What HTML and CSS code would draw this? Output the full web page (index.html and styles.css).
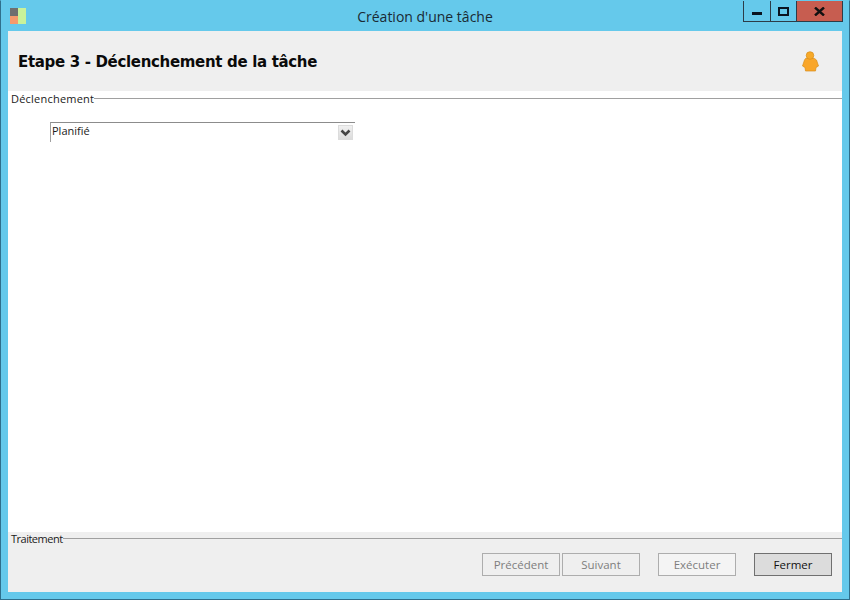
FILE: index.html
```html
<!DOCTYPE html>
<html lang="fr">
<head>
<meta charset="utf-8">
<title>Création d'une tâche</title>
<link rel="stylesheet" href="styles.css">
</head>
<body>
<div class="window">
  <div class="titlebar">
    <svg class="app-icon" width="17" height="16" viewBox="0 0 17 16">
      <rect x="0" y="0" width="8" height="8" fill="#6f6f6f"/>
      <rect x="0" y="8" width="8" height="8" fill="#f59a6c"/>
      <rect x="8" y="0" width="8" height="16" fill="#c9f29a"/>
    </svg>
    <div class="title">Création d'une tâche</div>
    <div class="controls">
      <div class="ctl ctl-min"><svg width="14" height="6" viewBox="0 0 14 6" class="min-glyph"><rect x="2" y="1" width="10" height="3" fill="#0a1420"/></svg></div>
      <div class="ctl ctl-max"><svg width="11" height="9" viewBox="0 0 11 9"><rect x="1" y="1" width="9" height="7" fill="none" stroke="#0a1420" stroke-width="2"/></svg></div>
      <div class="ctl ctl-close"><svg width="11" height="9" viewBox="0 0 11 9"><path d="M1 .5L10 8.500M10 .5L1 8.500" stroke="#111" stroke-width="2.400" fill="none"/></svg></div>
    </div>
  </div>
  <div class="client">
    <header class="head">
      <h1 class="head-title">Etape 3 - Déclenchement de la tâche</h1>
      <svg class="person" width="18" height="21" viewBox="0 0 18 21">
        <path d="M4.500 7.500h9l2 1.500 2 6-2.500 1.500-.5 3.500H4.500L4 16.500 1.500 15l2-6z" fill="#f9a62a" stroke="#d98e1a" stroke-width=".7"/>
        <circle cx="9" cy="4.500" r="3.800" fill="#f7a928" stroke="#d98e1a" stroke-width=".7"/>
      </svg>
    </header>
    <section class="main">
      <div class="group"><span class="group-label label-trigger">Déclenchement</span><span class="group-line"></span></div>
      <div class="combo">
        <span class="combo-text">Planifié</span>
        <span class="combo-btn"><svg width="11" height="8" viewBox="0 0 11 8"><path d="M1.500 1.500L5.500 5.500L9.500 1.500" fill="none" stroke="#444" stroke-width="2.600"/></svg></span>
      </div>
    </section>
    <footer class="foot">
      <div class="group"><span class="group-label label-process">Traitement</span><span class="group-line"></span></div>
      <div class="actions">
        <button class="btn" disabled>Précédent</button>
        <button class="btn btn-next" disabled>Suivant</button>
        <button class="btn btn-run" disabled>Exécuter</button>
        <button class="btn btn-close">Fermer</button>
      </div>
    </footer>
  </div>
</div>
</body>
</html>
```
FILE: styles.css
```css
* { box-sizing: border-box; }
html, body { margin: 0; padding: 0; }
body { width: 850px; height: 600px; overflow: hidden; font-family: "Open Sans", "Noto Sans", sans-serif; }
.window {
  width: 850px; height: 600px;
  background: #65c9eb;
  border: 1px solid #2f6f8c;
  border-top-color: #65c9eb;
  display: flex; flex-direction: column;
  padding: 0 7px 7px;
}
.titlebar { height: 30px; flex: none; display: flex; align-items: flex-start; position: relative; }
.app-icon { margin: 7px 0 0 2px; flex: none; }
.title {
  position: absolute; left: 0; right: 0; top: 6px;
  text-align: center; font-size: 14px; line-height: 19px; color: #1a2a33;
}
.controls { margin-left: auto; margin-right: -1px; display: flex; height: 21px; position: relative; border: 1px solid #2c3c48; border-top: 0; }
.ctl { display: flex; align-items: center; justify-content: center; height: 100%; }
.ctl-min { width: 27px; border-right: 1px solid #2c3c48; }
.min-glyph { margin-top: 6px; }
.ctl-max { width: 26px; border-right: 1px solid #2c3c48; }
.ctl-close { width: 45px; background: #c75d50; }
.client { flex: 1; display: flex; flex-direction: column; background: #fff; min-height: 0; }
.head { height: 60px; flex: none; background: #efefef; display: flex; align-items: center; justify-content: space-between; padding: 0 23px 0 10px; }
.head-title { margin: 1px 0 0; font-family: "DejaVu Sans", sans-serif; font-weight: bold; font-size: 15px; color: #0a0a0a; letter-spacing: -.33px; }
.person { flex: none; }
.main { flex: 1; min-height: 0; }
.group { display: flex; align-items: center; height: 15px; margin-left: 3px; }
.group-label { font-size: 11px; line-height: 15px; color: #1a1a1a; }
.label-trigger { letter-spacing: .22px; }
.label-process { letter-spacing: -.5px; }
.group-line { flex: 1; height: 1px; background: #a0a0a0; }
.combo {
  margin: 16px 0 0 42px; width: 305px; height: 20px;
  border-top: 1px solid #8c8c8c; border-left: 1px solid #a0a0a0;
  display: flex; justify-content: space-between;
}
.combo-text { font-size: 11px; line-height: 16px; padding-left: 1px; color: #1a1a1a; }
.combo-btn {
  width: 15px; height: 15px; margin: 2px 2px 0 0;
  background: linear-gradient(#f0f0f0, #dcdcdc); border: 1px solid #dcdcdc;
  display: flex; align-items: center; justify-content: center;
}
.foot { height: 60px; flex: none; background: #efefef; }
.foot .group { height: 13px; }
.actions { display: flex; justify-content: flex-end; padding: 8px 10px 0 0; }
.btn {
  width: 78px; height: 23px; padding: 0;
  font-family: inherit; font-size: 11.500px; line-height: 20px;
  border: 1px solid #adadad; background: #efefef; color: #7e7e7e;
}
.btn-next { margin-left: 2px; }
.btn-run { margin-left: 18px; background: #f4f4f4; }
.btn-close { margin-left: 18px; background: #dcdcdc; border-color: #707070; color: #111; }
```
